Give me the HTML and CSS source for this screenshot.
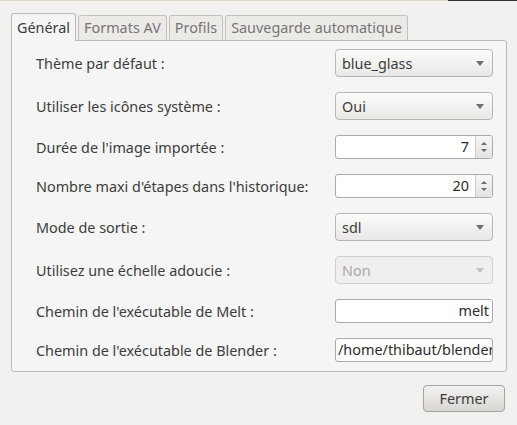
FILE: index.html
```html
<!DOCTYPE html>
<html lang="fr">
<head>
<meta charset="utf-8">
<title>Préférences</title>
<link rel="stylesheet" href="styles.css">
</head>
<body>
<div class="topline"><span class="tl-light"></span><span class="tl-dark"></span></div>
<div class="dialog">
  <div class="tabs">
    <div class="tab active">Général</div>
    <div class="tab">Formats AV</div>
    <div class="tab">Profils</div>
    <div class="tab">Sauvegarde automatique</div>
  </div>
  <div class="panel">
    <div class="row tall">
      <span class="label">Thème par défaut :</span>
      <div class="combo"><span>blue_glass</span><i class="arrow"></i></div>
    </div>
    <div class="row tall">
      <span class="label">Utiliser les icônes système :</span>
      <div class="combo"><span>Oui</span><i class="arrow"></i></div>
    </div>
    <div class="row">
      <span class="label">Durée de l'image importée :</span>
      <div class="spin"><span class="spin-val">7</span><span class="spin-btns"><i class="up"></i><i class="down"></i></span></div>
    </div>
    <div class="row">
      <span class="label">Nombre maxi d'étapes dans l'historique:</span>
      <div class="spin"><span class="spin-val">20</span><span class="spin-btns"><i class="up"></i><i class="down"></i></span></div>
    </div>
    <div class="row tall">
      <span class="label">Mode de sortie :</span>
      <div class="combo"><span>sdl</span><i class="arrow"></i></div>
    </div>
    <div class="row tall">
      <span class="label">Utilisez une échelle adoucie :</span>
      <div class="combo disabled"><span>Non</span><i class="arrow"></i></div>
    </div>
    <div class="row">
      <span class="label">Chemin de l'exécutable de Melt :</span>
      <div class="entry right">melt</div>
    </div>
    <div class="row">
      <span class="label">Chemin de l'exécutable de Blender :</span>
      <div class="entry">/home/thibaut/blender</div>
    </div>
  </div>
  <div class="footer">
    <button class="btn">Fermer</button>
  </div>
</div>
</body>
</html>
```

FILE: styles.css
```css
html, body {
  margin: 0;
  padding: 0;
}
body {
  width: 517px;
  height: 425px;
  overflow: hidden;
  background: #f2f1f0;
  font-family: "Noto Sans", "DejaVu Sans", sans-serif;
  font-size: 14.4px;
  color: #3c3c3c;
}
.topline {
  display: flex;
  height: 1px;
}
.tl-light {
  width: 448px;
  background: #dbd4c8;
}
.tl-dark {
  flex: 1;
  background: #2f2f35;
}
.dialog {
  padding: 12px 11px 0 11px;
}
.tabs {
  display: flex;
  align-items: flex-end;
  gap: 2px;
  height: 27px;
}
.tab {
  box-sizing: border-box;
  height: 25px;
  padding: 0 5px;
  border: 1px solid #c4c1bc;
  border-bottom: none;
  border-radius: 3px 3px 0 0;
  background: #eceae7;
  color: #757575;
  line-height: 24px;
  white-space: nowrap;
}
.tab.active {
  height: 28px;
  margin-bottom: -1px;
  position: relative;
  z-index: 1;
  background: #f5f5f5;
  color: #3c3c3c;
  border-color: #bcb9b4;
  line-height: 27px;
}
.panel {
  box-sizing: border-box;
  width: 496px;
  height: 332px;
  border: 1px solid #bcb9b4;
  border-radius: 0 3px 3px 3px;
  background: #f5f5f5;
  padding: 8px 13px 0 24px;
  display: flex;
  flex-direction: column;
  gap: 15px;
}
.row {
  display: flex;
  align-items: center;
  justify-content: space-between;
  height: 24px;
}
.row.tall {
  height: 28px;
}
.label {
  white-space: nowrap;
}
.combo {
  box-sizing: border-box;
  width: 158px;
  height: 28px;
  border: 1px solid #b8b6b1;
  border-radius: 4px;
  background: linear-gradient(#fbfbfa, #e9e8e6);
  display: flex;
  align-items: center;
  justify-content: space-between;
  padding: 0 8px 0 6px;
  color: #3c3c3c;
}
.combo.disabled {
  background: #f0efee;
  border-color: #d2d0cc;
  color: #a8a8a8;
}
.arrow {
  width: 0;
  height: 0;
  border-left: 4px solid transparent;
  border-right: 4px solid transparent;
  border-top: 5px solid #707070;
}
.combo.disabled .arrow {
  border-top-color: #c0c0c0;
}
.spin {
  box-sizing: border-box;
  width: 158px;
  height: 24px;
  border: 1px solid #ababab;
  border-radius: 3px;
  background: #fff;
  display: flex;
  overflow: hidden;
}
.spin-val {
  flex: 1;
  text-align: right;
  padding-right: 6px;
  line-height: 22px;
  color: #2c2c2c;
}
.spin-btns {
  width: 16px;
  border-left: 1px solid #cfcdca;
  background: linear-gradient(#f6f6f5, #e4e3e1);
  display: flex;
  flex-direction: column;
  align-items: center;
  justify-content: center;
  gap: 4px;
}
.up, .down {
  width: 0;
  height: 0;
  border-left: 3px solid transparent;
  border-right: 3px solid transparent;
}
.up {
  border-bottom: 3px solid #6a6a6a;
}
.down {
  border-top: 3px solid #6a6a6a;
}
.entry {
  box-sizing: border-box;
  width: 158px;
  height: 24px;
  border: 1px solid #ababab;
  border-radius: 3px;
  background: #fff;
  padding: 0 4px 0 2px;
  line-height: 22px;
  white-space: nowrap;
  overflow: hidden;
  color: #2c2c2c;
}
.entry.right {
  text-align: right;
  padding-right: 3px;
}
.footer {
  display: flex;
  justify-content: flex-end;
  padding: 13px 1px 0 0;
}
.btn {
  box-sizing: border-box;
  width: 82px;
  height: 27px;
  border: 1px solid #a6a39e;
  border-radius: 4px;
  background: linear-gradient(#f3f2f0, #d9d7d3);
  font-family: inherit;
  font-size: 14.4px;
  color: #3c3c3c;
  padding: 0;
}
```
